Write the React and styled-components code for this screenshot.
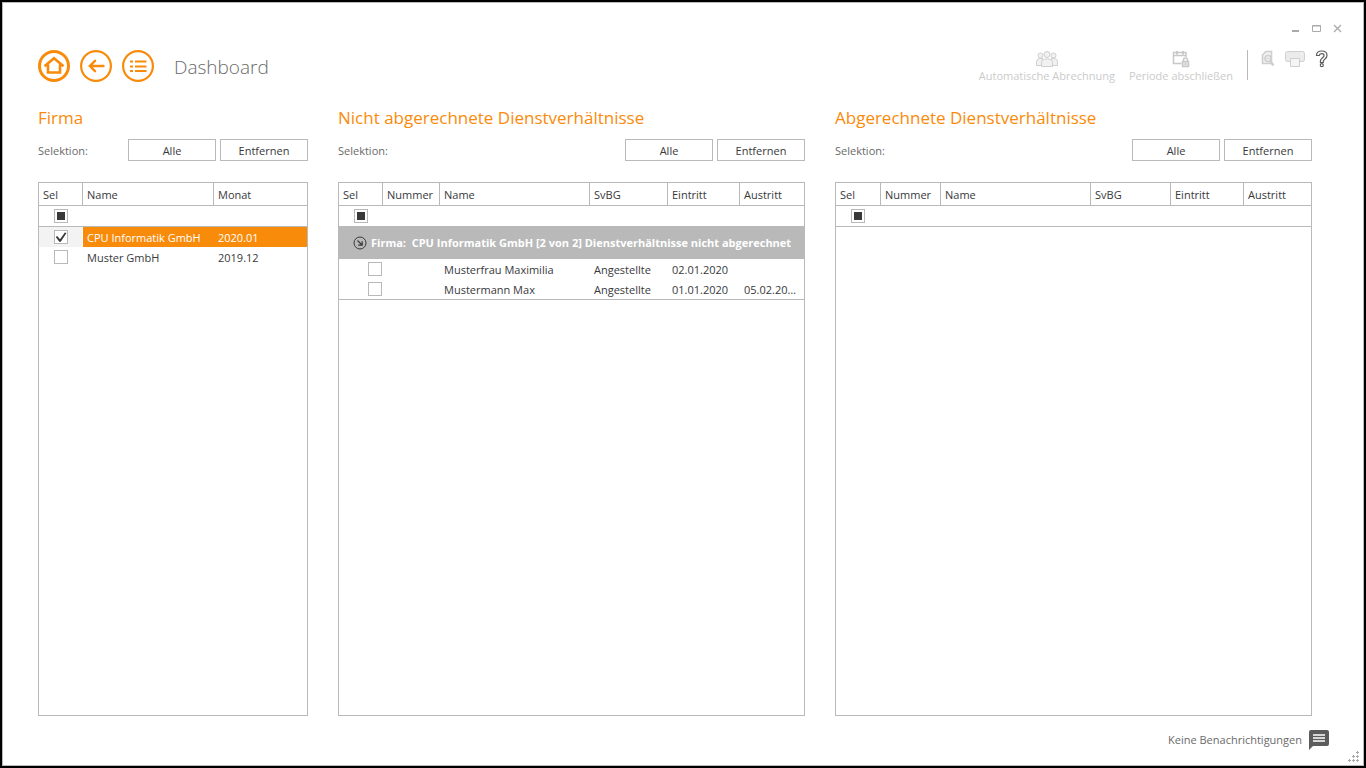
import React, { useEffect, useRef, useState } from "react";
import styled, { createGlobalStyle } from "styled-components";

const GlobalStyle = createGlobalStyle`
  * {
    box-sizing: border-box;
  }

  body {
    margin: 0;
    background-color: #000;
    font-family: "Open Sans", "Noto Sans", sans-serif;
    font-size: 11px;
    line-height: 16px;
    color: #38393b;
  }

  button, input {
    font: inherit;
    color: inherit;
  }
`;

const Frame = styled.div`
  min-height: 100vh;
  padding: 2px;
  display: flex;
`;

const Window = styled.div`
  position: relative;
  flex: 1;
  min-width: 0;
  display: flex;
  flex-direction: column;
  border: 1px solid #b9b9b9;
  background-color: white;
`;

const PlainButton = styled.button`
  display: flex;
  padding: 0;
  border: none;
  background: none;
  cursor: pointer;

  &:disabled {
    cursor: default;
  }
`;

const TitleBar = styled.div`
  display: flex;
  justify-content: flex-end;
  gap: 10px;
  padding: 20px 20px 0 0;
  height: 47px;
`;

const Header = styled.header`
  display: flex;
  align-items: flex-start;
  justify-content: space-between;
  padding: 0 34px 0 35px;
  height: 56px;
`;

const Navigation = styled.nav`
  display: flex;
  align-items: flex-start;
  gap: 10px;
`;

const PageTitle = styled.h1`
  margin: 0 0 0 10px;
  font-size: 19px;
  line-height: 34px;
  font-weight: 300;
  color: #6a6a6a;
`;

const Toolbar = styled.div`
  display: flex;
  align-items: flex-start;
`;

const ToolbarButton = styled(PlainButton)`
  flex-direction: column;
  align-items: center;
  margin-right: 14px;
  color: #cbcbcb;
  white-space: nowrap;
`;

const ToolbarIcons = styled.div`
  display: flex;
  gap: 10px;
  height: 30px;
  padding-left: 13px;
  border-left: 1px solid #b9b9b9;
`;

const Panels = styled.main`
  flex: 1;
  display: grid;
  grid-template-columns: 270fr 467fr 477fr;
  gap: 30px;
  padding: 0 51px 0 35px;
`;

const PanelSection = styled.section`
  display: flex;
  flex-direction: column;
  min-width: 0;
`;

const PanelTitle = styled.h2`
  margin: 0;
  font-size: 17px;
  line-height: 24px;
  font-weight: 400;
  color: #f98b0b;
  white-space: nowrap;
`;

const Selection = styled.div`
  display: flex;
  align-items: center;
  gap: 4px;
  margin: 9px 0 21px;

  span {
    flex: 1;
    padding-top: 2px;
    color: #6a6a6a;
  }
`;

const SelectionButton = styled.button`
  width: 88px;
  height: 22px;
  padding: 2px 0 0;
  border: 1px solid #b9b9b9;
  background-color: white;
  cursor: pointer;
`;

const GridBox = styled.div`
  flex: 1;
  border: 1px solid #b9b9b9;
  overflow: hidden;
`;

const Table = styled.table`
  width: 100%;
  table-layout: fixed;
  border-collapse: separate;
  border-spacing: 0;
`;

const HeadCell = styled.th`
  width: ${(props) => (props.$width ? `${props.$width}px` : "auto")};
  height: 23px;
  padding: 2px 4px 0;
  border-right: 1px solid #b9b9b9;
  border-bottom: 1px solid #b9b9b9;
  font-weight: 400;
  text-align: left;
  white-space: nowrap;

  &:last-child {
    border-right: none;
  }
`;

const FilterCell = styled.td`
  height: 21px;
  padding: 0 0 0 15px;
  border-bottom: 1px solid #b9b9b9;
`;

const GroupCell = styled.td`
  height: 32px;
  padding: 0 0 0 14px;
  background-color: #b9b9b9;
`;

const GroupLabel = styled.div`
  display: flex;
  align-items: center;
  gap: 4px;
  font-weight: 700;
  color: white;
  white-space: pre;

  svg {
    flex: none;
  }
`;

const Row = styled.tr`
  td {
    background-color: ${(props) => (props.$selected ? "#f98b0b" : "white")};
    color: ${(props) => (props.$selected ? "white" : "inherit")};
  }

  td:first-child {
    padding: 0 0 0 ${(props) => (props.$nested ? 29 : 15)}px;
    border-right: 1px solid white;
    background-color: ${(props) => (props.$selected ? "#f3f3f3" : "white")};
  }
`;

const Cell = styled.td`
  height: 20px;
  padding: 2px 4px 0;
  overflow: hidden;
  white-space: nowrap;
  text-overflow: ellipsis;
`;

const GroupEnd = styled.td`
  height: 1px;
  padding: 0;
  background-color: #b9b9b9;
`;

const Box = styled.input`
  appearance: none;
  display: block;
  width: 14px;
  height: 14px;
  margin: 0;
  border: 1px solid #b9b9b9;
  background-color: white;

  &::before {
    content: "";
    display: none;
  }

  &:indeterminate::before {
    display: block;
    width: 8px;
    height: 8px;
    margin: 2px;
    background-color: #38393b;
  }

  &:checked::before {
    display: block;
    width: 12px;
    height: 12px;
    background-color: #38393b;
    clip-path: polygon(6% 50%, 18% 42%, 42% 68%, 82% 12%, 96% 16%, 48% 90%, 36% 90%);
  }
`;

const Footer = styled.footer`
  display: flex;
  justify-content: flex-end;
  align-items: center;
  gap: 7px;
  height: 49px;
  padding: 0 34px 2px 0;
  color: #6a6a6a;
`;

const ResizeGrip = styled.svg`
  position: absolute;
  right: 3px;
  bottom: 3px;
`;

const companies = [
  { name: "CPU Informatik GmbH", month: "2020.01", checked: true },
  { name: "Muster GmbH", month: "2019.12", checked: false },
];

const employments = [
  { name: "Musterfrau Maximilia", type: "Angestellte", entry: "02.01.2020", exit: "" },
  { name: "Mustermann Max", type: "Angestellte", entry: "01.01.2020", exit: "05.02.2020" },
];

const companyColumns = [
  { label: "Sel", width: 44 },
  { label: "Name" },
  { label: "Monat", width: 93 },
];

const openColumns = [
  { label: "Sel", width: 44 },
  { label: "Nummer", width: 57 },
  { label: "Name" },
  { label: "SvBG", width: 78 },
  { label: "Eintritt", width: 72 },
  { label: "Austritt", width: 64 },
];

const settledColumns = [
  { label: "Sel", width: 45 },
  { label: "Nummer", width: 60 },
  { label: "Name" },
  { label: "SvBG", width: 80 },
  { label: "Eintritt", width: 73 },
  { label: "Austritt", width: 67 },
];

function HomeIcon() {
  return (
    <svg width="32" height="32" fill="none" stroke="#f98b0b">
      <circle cx="16" cy="16" r="14.500" strokeWidth="3" />
      <path d="M6.500 16.200 16 8.300l9.500 7.900M10 14.500v8h12v-8" strokeWidth="2.600" />
    </svg>
  );
}

function BackIcon() {
  return (
    <svg width="32" height="32" fill="none" stroke="#f98b0b">
      <circle cx="16" cy="16" r="14.900" strokeWidth="2.200" />
      <path d="M23.500 16H10M15 10.800 9.800 16l5.200 5.200" strokeWidth="2.400" strokeLinecap="round" />
    </svg>
  );
}

function ListIcon() {
  return (
    <svg width="32" height="32" fill="none" stroke="#f98b0b">
      <circle cx="16" cy="16" r="14.900" strokeWidth="2.200" />
      <path d="M8 11.500h3M13 11.500h11.500M8 16.500h3M13 16.500h11.500M8 21h3M13 21h11.500" strokeWidth="2.200" />
    </svg>
  );
}

function PeopleIcon() {
  return (
    <svg width="24" height="18" fill="#f1f1f1" stroke="#cfcfcf">
      <path d="M1.500 15.500v-4q0-2.500 3-3h3v7zM22.500 15.500v-4q0-2.500-3-3h-3v7z" />
      <circle cx="5.500" cy="5.500" r="2.500" />
      <circle cx="18.500" cy="5.500" r="2.500" />
      <path d="M6.500 16.500v-4q0-3 3-3.500h5q3 .5 3 3.500v4z" />
      <circle cx="12" cy="4.500" r="3" />
    </svg>
  );
}

function CalendarLockIcon() {
  return (
    <svg width="18" height="18" fill="none" stroke="#c8c8c8">
      <path d="M9.500 13.500h-8v-11h12.500V7M1 5.500h13" strokeWidth="1.500" />
      <path d="M5 1v3.500M11 1v3.500" strokeWidth="2" />
      <rect x="10.500" y="11.500" width="6" height="5" fill="#e6e6e6" strokeWidth="1.500" />
      <path d="M11.500 11.500V10q0-2 2-2t2 2v1.500M13.500 13v2" strokeWidth="1.500" />
    </svg>
  );
}

function PreviewIcon() {
  return (
    <svg width="14" height="18" fill="#f1f1f1" stroke="#cfcfcf">
      <path d="M4.500 13.500h-3V5l3.500-3.500h5.500v12z" strokeWidth="1.600" />
      <circle cx="7" cy="8.500" r="3" strokeWidth="1.600" />
      <path d="m9 11 3.500 4.500" strokeWidth="2.500" />
      <path d="M5.500 8.500h3" />
    </svg>
  );
}

function PrintIcon() {
  return (
    <svg width="20" height="18" fill="#ebebeb" stroke="#cfcfcf">
      <path d="M2.500 1.500h15q2 0 2 2v6q0 2-2 2h-15q-2 0-2-2v-6q0-2 2-2z" />
      <path d="M5.500 8.500h9v8h-9z" fill="#f5f5f5" />
      <path d="M16 4h1.500" stroke="white" />
    </svg>
  );
}

function HelpIcon() {
  return (
    <svg width="14" height="18" fill="white" stroke="#5c5c5c">
      <path d="M1.500 5.500Q1.500 1 6.800 1t5.200 4.500q0 2-2 3.500T8.200 12v.5H5.400V11q0-1.500 1.900-3T9 5.500Q9 3.700 6.800 3.700T4.300 5.500z" strokeWidth="1.200" />
      <circle cx="6.800" cy="15.200" r="1.500" strokeWidth="1.200" />
    </svg>
  );
}

function CollapseIcon() {
  return (
    <svg width="14" height="14" fill="none" stroke="#38393b">
      <circle cx="7" cy="7" r="6" />
      <path d="m4.500 4.500 4.500 4.500M9.200 5.200v4h-4" strokeWidth="1.200" />
    </svg>
  );
}

function MessageIcon() {
  return (
    <svg width="20" height="20">
      <path d="M2 0h16q2 0 2 2v12q0 2-2 2H4l-4 4V2q0-2 2-2z" fill="#5c5c5c" />
      <path d="M4 5h12M4 8h12M4 11h12" stroke="white" strokeWidth="1.600" />
    </svg>
  );
}

function CheckBox({ label, initial = false, mixed = false }) {
  const ref = useRef(null);
  const [checked, setChecked] = useState(initial);

  useEffect(() => {
    ref.current.indeterminate = mixed;
  }, [mixed]);

  return (
    <Box
      ref={ref}
      type="checkbox"
      aria-label={label}
      checked={checked}
      onChange={(e) => setChecked(e.target.checked)}
    />
  );
}

function Panel({ title, columns, children }) {
  return (
    <PanelSection>
      <PanelTitle>{title}</PanelTitle>
      <Selection>
        <span>Selektion:</span>
        <SelectionButton type="button">Alle</SelectionButton>
        <SelectionButton type="button">Entfernen</SelectionButton>
      </Selection>
      <GridBox>
        <Table>
          <thead>
            <tr>
              {columns.map((column) => (
                <HeadCell key={column.label} $width={column.width}>
                  {column.label}
                </HeadCell>
              ))}
            </tr>
          </thead>
          <tbody>
            <tr>
              <FilterCell colSpan={columns.length}>
                <CheckBox label="Filter" mixed />
              </FilterCell>
            </tr>
            {children}
          </tbody>
        </Table>
      </GridBox>
    </PanelSection>
  );
}

export default function App() {
  return (
    <Frame>
      <GlobalStyle />
      <Window>
        <TitleBar>
          <PlainButton type="button" aria-label="Minimieren">
            <svg width="11" height="11">
              <path d="M2 8h7" stroke="#aaa" strokeWidth="2" />
            </svg>
          </PlainButton>
          <PlainButton type="button" aria-label="Maximieren">
            <svg width="11" height="11" fill="none" stroke="#aaa">
              <path d="M1.500 2.500h8v6h-8zM1 3h9" />
            </svg>
          </PlainButton>
          <PlainButton type="button" aria-label="Schließen">
            <svg width="11" height="11" stroke="#aaa">
              <path d="m2 2 7 7M9 2 2 9" strokeWidth="1.300" />
            </svg>
          </PlainButton>
        </TitleBar>
        <Header>
          <Navigation>
            <PlainButton type="button" aria-label="Startseite">
              <HomeIcon />
            </PlainButton>
            <PlainButton type="button" aria-label="Zurück">
              <BackIcon />
            </PlainButton>
            <PlainButton type="button" aria-label="Menü">
              <ListIcon />
            </PlainButton>
            <PageTitle>Dashboard</PageTitle>
          </Navigation>
          <Toolbar>
            <ToolbarButton type="button" disabled>
              <PeopleIcon />
              Automatische Abrechnung
            </ToolbarButton>
            <ToolbarButton type="button" disabled>
              <CalendarLockIcon />
              Periode abschließen
            </ToolbarButton>
            <ToolbarIcons>
              <PlainButton type="button" aria-label="Vorschau" disabled>
                <PreviewIcon />
              </PlainButton>
              <PlainButton type="button" aria-label="Drucken" disabled>
                <PrintIcon />
              </PlainButton>
              <PlainButton type="button" aria-label="Hilfe">
                <HelpIcon />
              </PlainButton>
            </ToolbarIcons>
          </Toolbar>
        </Header>
        <Panels>
          <Panel title="Firma" columns={companyColumns}>
            {companies.map((item) => (
              <Row key={item.name} $selected={item.checked}>
                <Cell>
                  <CheckBox label={item.name} initial={item.checked} />
                </Cell>
                <Cell>{item.name}</Cell>
                <Cell>{item.month}</Cell>
              </Row>
            ))}
          </Panel>
          <Panel title="Nicht abgerechnete Dienstverhältnisse" columns={openColumns}>
            <tr>
              <GroupCell colSpan={6}>
                <GroupLabel>
                  <CollapseIcon />
                  {"Firma:  CPU Informatik GmbH [2 von 2] Dienstverhältnisse nicht abgerechnet"}
                </GroupLabel>
              </GroupCell>
            </tr>
            {employments.map((item) => (
              <Row key={item.name} $nested>
                <Cell>
                  <CheckBox label={item.name} />
                </Cell>
                <Cell />
                <Cell>{item.name}</Cell>
                <Cell>{item.type}</Cell>
                <Cell>{item.entry}</Cell>
                <Cell>{item.exit}</Cell>
              </Row>
            ))}
            <tr>
              <GroupEnd colSpan={6} />
            </tr>
          </Panel>
          <Panel title="Abgerechnete Dienstverhältnisse" columns={settledColumns} />
        </Panels>
        <Footer>
          Keine Benachrichtigungen
          <PlainButton type="button" aria-label="Benachrichtigungen">
            <MessageIcon />
          </PlainButton>
        </Footer>
        <ResizeGrip width="12" height="12" stroke="#aaa">
          <path d="M8 2.500h3M9.500 1v3M4 6.500h3M5.500 5v3M8 6.500h3M9.500 5v3M0 10.500h3M1.500 9v3M4 10.500h3M5.500 9v3M8 10.500h3M9.500 9v3" />
        </ResizeGrip>
      </Window>
    </Frame>
  );
}
